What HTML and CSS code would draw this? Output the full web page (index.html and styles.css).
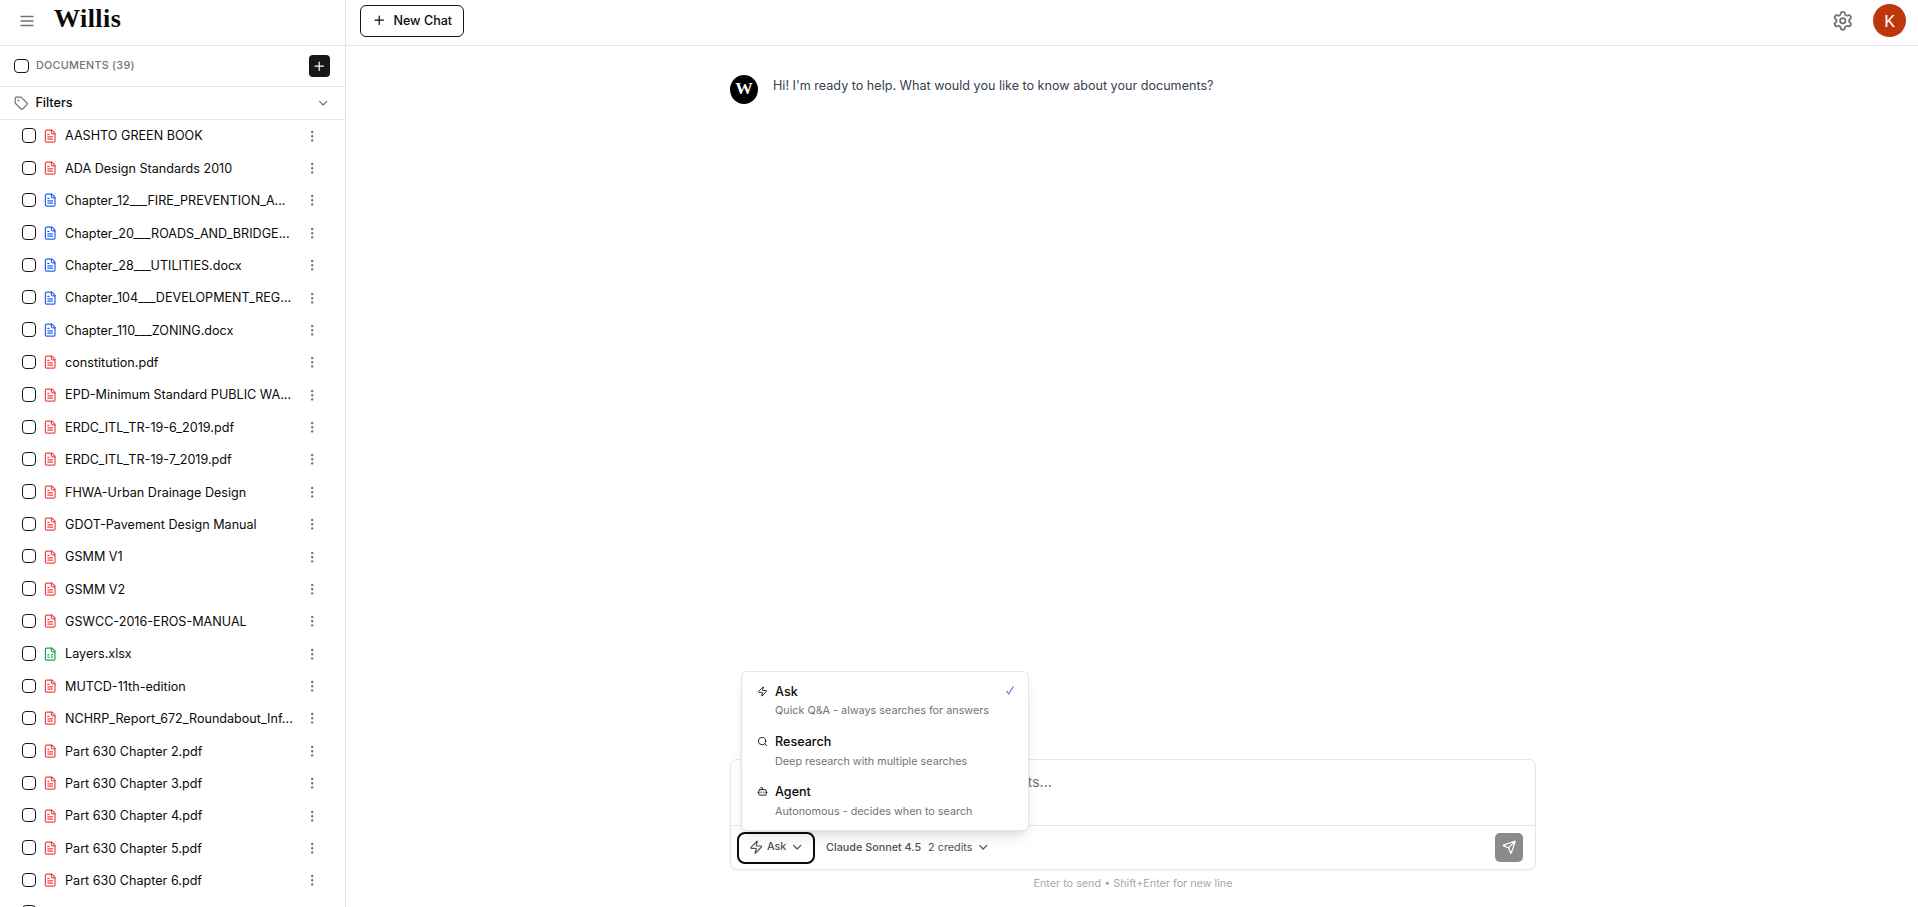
FILE: index.html
```html
<!DOCTYPE html>
<html lang="en">
<head>
<meta charset="utf-8">
<title>Willis</title>
<link rel="stylesheet" href="styles.css">
</head>
<body>
<svg class="sprite" xmlns="http://www.w3.org/2000/svg">
  <symbol id="menu" viewBox="0 0 24 24"><path d="M4 6h16M4 12h16M4 18h16"/></symbol>
  <symbol id="plus" viewBox="0 0 24 24"><path d="M5 12h14M12 5v14"/></symbol>
  <symbol id="chevron" viewBox="0 0 24 24"><path d="m6 9 6 6 6-6"/></symbol>
  <symbol id="tag" viewBox="0 0 24 24"><path d="M12.586 2.586A2 2 0 0 0 11.172 2H4a2 2 0 0 0-2 2v7.172a2 2 0 0 0 .586 1.414l8.704 8.704a2.426 2.426 0 0 0 3.42 0l6.58-6.58a2.426 2.426 0 0 0 0-3.42z"/><circle cx="7.5" cy="7.5" r=".5" fill="currentColor"/></symbol>
  <symbol id="doc" viewBox="0 0 24 24"><path d="M15 2H6a2 2 0 0 0-2 2v16a2 2 0 0 0 2 2h12a2 2 0 0 0 2-2V7Z"/><path d="M14 2v4a2 2 0 0 0 2 2h4M10 9H8M16 13H8M16 17H8"/></symbol>
  <symbol id="sheet" viewBox="0 0 24 24"><path d="M15 2H6a2 2 0 0 0-2 2v16a2 2 0 0 0 2 2h12a2 2 0 0 0 2-2V7Z"/><path d="M14 2v4a2 2 0 0 0 2 2h4M8 13h2M14 13h2M8 17h2M14 17h2"/></symbol>
  <symbol id="dots" viewBox="0 0 24 24"><circle cx="12" cy="12" r="1"/><circle cx="12" cy="5" r="1"/><circle cx="12" cy="19" r="1"/></symbol>
  <symbol id="gear" viewBox="0 0 24 24"><path d="M9.671 4.136a2.34 2.34 0 0 1 4.659 0 2.34 2.34 0 0 0 3.319 1.915 2.34 2.34 0 0 1 2.33 4.033 2.34 2.34 0 0 0 0 3.831 2.34 2.34 0 0 1-2.33 4.033 2.34 2.34 0 0 0-3.319 1.915 2.34 2.34 0 0 1-4.659 0 2.34 2.34 0 0 0-3.32-1.915 2.34 2.34 0 0 1-2.33-4.033 2.34 2.34 0 0 0 0-3.831A2.34 2.34 0 0 1 6.35 6.051a2.34 2.34 0 0 0 3.319-1.915"/><circle cx="12" cy="12" r="3"/></symbol>
  <symbol id="zap" viewBox="0 0 24 24"><path d="M4 14a1 1 0 0 1-.78-1.63l9.9-10.2a.5.5 0 0 1 .86.46l-1.92 6.02A1 1 0 0 0 13 10h7a1 1 0 0 1 .78 1.63l-9.9 10.2a.5.5 0 0 1-.86-.46l1.92-6.02A1 1 0 0 0 11 14z"/></symbol>
  <symbol id="search" viewBox="0 0 24 24"><path d="m21 21-4.34-4.34"/><circle cx="11" cy="11" r="8"/></symbol>
  <symbol id="bot" viewBox="0 0 24 24"><path d="M12 8V4H8"/><rect width="16" height="12" x="4" y="8" rx="2"/><path d="M2 14h2M20 14h2M15 13v2M9 13v2"/></symbol>
  <symbol id="send" viewBox="0 0 24 24"><path d="M14.536 21.686a.5.5 0 0 0 .937-.024l6.5-19a.496.496 0 0 0-.635-.635l-19 6.5a.5.5 0 0 0-.024.937l7.93 3.18a2 2 0 0 1 1.112 1.11zM21.854 2.147l-10.94 10.939"/></symbol>
  <symbol id="tick" viewBox="0 0 8 9"><path d="M.8 5.4 2.7 8 7.2.8"/></symbol>
</svg>
<div class="app">
  <aside class="sidebar">
    <div class="brand"><svg class="icon menu"><use href="#menu"/></svg><span class="logo">Willis</span></div>
    <div class="docs-head"><span class="check"></span><span class="docs-title">DOCUMENTS (39)</span><button class="add"><svg class="icon"><use href="#plus"/></svg></button></div>
    <div class="filters"><svg class="icon tag"><use href="#tag"/></svg><span class="filters-label">Filters</span><svg class="icon arrow"><use href="#chevron"/></svg></div>
    <ul class="list">
      <li class="row"><span class="check"></span><svg class="icon pdf"><use href="#doc"/></svg><span class="name">AASHTO GREEN BOOK</span><svg class="icon more"><use href="#dots"/></svg></li>
      <li class="row"><span class="check"></span><svg class="icon pdf"><use href="#doc"/></svg><span class="name">ADA Design Standards 2010</span><svg class="icon more"><use href="#dots"/></svg></li>
      <li class="row"><span class="check"></span><svg class="icon docx"><use href="#doc"/></svg><span class="name">Chapter_12___FIRE_PREVENTION_A...</span><svg class="icon more"><use href="#dots"/></svg></li>
      <li class="row"><span class="check"></span><svg class="icon docx"><use href="#doc"/></svg><span class="name">Chapter_20___ROADS_AND_BRIDGE...</span><svg class="icon more"><use href="#dots"/></svg></li>
      <li class="row"><span class="check"></span><svg class="icon docx"><use href="#doc"/></svg><span class="name">Chapter_28___UTILITIES.docx</span><svg class="icon more"><use href="#dots"/></svg></li>
      <li class="row"><span class="check"></span><svg class="icon docx"><use href="#doc"/></svg><span class="name">Chapter_104___DEVELOPMENT_REG...</span><svg class="icon more"><use href="#dots"/></svg></li>
      <li class="row"><span class="check"></span><svg class="icon docx"><use href="#doc"/></svg><span class="name">Chapter_110___ZONING.docx</span><svg class="icon more"><use href="#dots"/></svg></li>
      <li class="row"><span class="check"></span><svg class="icon pdf"><use href="#doc"/></svg><span class="name">constitution.pdf</span><svg class="icon more"><use href="#dots"/></svg></li>
      <li class="row"><span class="check"></span><svg class="icon pdf"><use href="#doc"/></svg><span class="name">EPD-Minimum Standard PUBLIC WA...</span><svg class="icon more"><use href="#dots"/></svg></li>
      <li class="row"><span class="check"></span><svg class="icon pdf"><use href="#doc"/></svg><span class="name">ERDC_ITL_TR-19-6_2019.pdf</span><svg class="icon more"><use href="#dots"/></svg></li>
      <li class="row"><span class="check"></span><svg class="icon pdf"><use href="#doc"/></svg><span class="name">ERDC_ITL_TR-19-7_2019.pdf</span><svg class="icon more"><use href="#dots"/></svg></li>
      <li class="row"><span class="check"></span><svg class="icon pdf"><use href="#doc"/></svg><span class="name">FHWA-Urban Drainage Design</span><svg class="icon more"><use href="#dots"/></svg></li>
      <li class="row"><span class="check"></span><svg class="icon pdf"><use href="#doc"/></svg><span class="name">GDOT-Pavement Design Manual</span><svg class="icon more"><use href="#dots"/></svg></li>
      <li class="row"><span class="check"></span><svg class="icon pdf"><use href="#doc"/></svg><span class="name">GSMM V1</span><svg class="icon more"><use href="#dots"/></svg></li>
      <li class="row"><span class="check"></span><svg class="icon pdf"><use href="#doc"/></svg><span class="name">GSMM V2</span><svg class="icon more"><use href="#dots"/></svg></li>
      <li class="row"><span class="check"></span><svg class="icon pdf"><use href="#doc"/></svg><span class="name">GSWCC-2016-EROS-MANUAL</span><svg class="icon more"><use href="#dots"/></svg></li>
      <li class="row"><span class="check"></span><svg class="icon xlsx"><use href="#sheet"/></svg><span class="name">Layers.xlsx</span><svg class="icon more"><use href="#dots"/></svg></li>
      <li class="row"><span class="check"></span><svg class="icon pdf"><use href="#doc"/></svg><span class="name">MUTCD-11th-edition</span><svg class="icon more"><use href="#dots"/></svg></li>
      <li class="row"><span class="check"></span><svg class="icon pdf"><use href="#doc"/></svg><span class="name">NCHRP_Report_672_Roundabout_Inf...</span><svg class="icon more"><use href="#dots"/></svg></li>
      <li class="row"><span class="check"></span><svg class="icon pdf"><use href="#doc"/></svg><span class="name">Part 630 Chapter 2.pdf</span><svg class="icon more"><use href="#dots"/></svg></li>
      <li class="row"><span class="check"></span><svg class="icon pdf"><use href="#doc"/></svg><span class="name">Part 630 Chapter 3.pdf</span><svg class="icon more"><use href="#dots"/></svg></li>
      <li class="row"><span class="check"></span><svg class="icon pdf"><use href="#doc"/></svg><span class="name">Part 630 Chapter 4.pdf</span><svg class="icon more"><use href="#dots"/></svg></li>
      <li class="row"><span class="check"></span><svg class="icon pdf"><use href="#doc"/></svg><span class="name">Part 630 Chapter 5.pdf</span><svg class="icon more"><use href="#dots"/></svg></li>
      <li class="row"><span class="check"></span><svg class="icon pdf"><use href="#doc"/></svg><span class="name">Part 630 Chapter 6.pdf</span><svg class="icon more"><use href="#dots"/></svg></li>
      <li class="row"><span class="check"></span></li>
    </ul>
  </aside>
  <main class="main">
    <header class="topbar">
      <button class="new-chat"><svg class="icon"><use href="#plus"/></svg>New Chat</button>
      <svg class="icon gear"><use href="#gear"/></svg>
      <span class="avatar">K</span>
    </header>
    <section class="thread">
      <div class="message"><span class="bot-avatar">W</span><p class="bubble">Hi! I'm ready to help. What would you like to know about your documents?</p></div>
    </section>
    <footer class="dock">
      <div class="composer">
        <div class="prompt"><p class="placeholder">ts...</p></div>
        <div class="tools">
          <button class="mode"><svg class="icon"><use href="#zap"/></svg><span>Ask</span><svg class="icon"><use href="#chevron"/></svg></button>
          <button class="model"><b>Claude Sonnet 4.5</b><span>2 credits</span><svg class="icon"><use href="#chevron"/></svg></button>
          <button class="send"><svg class="icon"><use href="#send"/></svg></button>
        </div>
        <div class="popup">
          <div class="option"><svg class="icon"><use href="#zap"/></svg><div><h4>Ask</h4><p>Quick Q&amp;A - always searches for answers</p></div><svg class="icon tick"><use href="#tick"/></svg></div>
          <div class="option"><svg class="icon"><use href="#search"/></svg><div><h4>Research</h4><p>Deep research with multiple searches</p></div></div>
          <div class="option"><svg class="icon"><use href="#bot"/></svg><div><h4>Agent</h4><p>Autonomous - decides when to search</p></div></div>
        </div>
      </div>
      <p class="hint">Enter to send • Shift+Enter for new line</p>
    </footer>
  </main>
</div>
</body>
</html>
```
FILE: styles.css
```css
* { box-sizing: border-box; margin: 0; padding: 0; }
body { font-family: Inter, "Liberation Sans", sans-serif; font-size: 12.6px; color: #0a0a0a; background: #fff; overflow: hidden; }
button { font: inherit; color: inherit; background: none; border: 0; }
.sprite { display: none; }
.icon { width: 14.4px; height: 14.4px; flex: none; fill: none; stroke: currentColor; stroke-width: 2; stroke-linecap: round; stroke-linejoin: round; }
.app { display: flex; height: 907px; }

.sidebar { width: 346px; flex: none; border-right: 1px solid #e5e5e5; overflow: hidden; }
.brand { height: 46px; display: flex; align-items: center; padding: 0 0 4px 18px; border-bottom: 1px solid #e5e5e5; }
.menu { width: 18px; height: 18px; color: #737373; stroke-width: 1.7; }
.logo { font: bold 26px/30px "Liberation Serif", serif; letter-spacing: .45px; margin: -4px 0 0 18px; }
.check { width: 14.4px; height: 14.4px; flex: none; border: 1px solid #171717; border-radius: 4px; }
.docs-head { height: 41px; display: flex; align-items: center; padding: 0 15px 0 14px; border-bottom: 1px solid #e5e5e5; }
.docs-head .check { width: 15px; }
.docs-title { font-size: 10.8px; font-weight: 500; letter-spacing: .27px; color: #737373; margin: -2px 0 0 7px; }
.add { width: 21px; height: 22px; margin-left: auto; border-radius: 4px; background: #171717; color: #fff; display: flex; align-items: center; justify-content: center; }
.filters { height: 33px; display: flex; align-items: center; gap: 7px; padding: 0 15px 0 14px; border-bottom: 1px solid #e5e5e5; }
.filters-label { font-weight: 450; margin-top: -2px; }
.tag, .arrow { color: #737373; }
.arrow { margin-left: auto; }
.list { list-style: none; margin-top: -.3px; }
.row { height: 32.38px; display: flex; align-items: center; padding: 0 26px 0 21.6px; }
.row .check { margin: -1px 6.8px 0 0; }
.name { margin-left: 7.9px; white-space: nowrap; }
.pdf { color: #ef4444; }
.docx { color: #2563eb; }
.xlsx { color: #16a34a; }
.more { margin-left: auto; color: #737373; }

.main { flex: 1; display: flex; flex-direction: column; }
.topbar { height: 46px; display: flex; align-items: center; padding: 0 12px 4px 14px; border-bottom: 1px solid #e5e5e5; }
.new-chat { height: 32px; width: 104px; display: flex; align-items: center; gap: 7px; padding-left: 11px; border: 1px solid #171717; border-radius: 6px; font-weight: 500; }
.gear { width: 21.6px; height: 21.6px; margin-left: auto; color: #737373; }
.avatar { width: 33px; height: 33px; margin-left: 19px; border-radius: 50%; background: #bf360c; color: #fff; font: 17px Roboto, sans-serif; display: flex; align-items: center; justify-content: center; }
.thread { flex: 1; padding: 29px 0 0 384px; }
.message { display: flex; align-items: flex-start; gap: 15px; }
.bot-avatar { width: 28px; height: 29px; border-radius: 50%; background: #000; color: #fff; font: bold 17.5px/27px "Liberation Serif", serif; text-align: center; }
.bubble { line-height: 20.5px; padding-top: 1px; color: #374151; }

.dock { width: 806px; margin-left: 384px; }
.composer { position: relative; height: 111px; border: 1px solid #e5e5e5; border-radius: 7px; box-shadow: 0 1px 2px rgba(0, 0, 0, .05); }
.prompt { height: 66px; padding: 11px 14px; font-size: 14.4px; line-height: 21px; color: #737373; border-bottom: 1px solid #e5e5e5; }
.placeholder { width: 307px; text-align: right; }
.tools { height: 43px; display: flex; align-items: center; padding: 0 12px 0 6px; font-size: 10.8px; color: #525252; }
.mode { width: 78px; height: 32px; display: flex; align-items: center; gap: 3.5px; padding: 0 0 1px 10px; border: 2px solid #0a0a0a; border-radius: 8px; font-weight: 500; }
.mode span { margin-top: -1px; }
.model { display: flex; align-items: center; margin-left: 11px; }
.model b { font-weight: 500; margin-right: 7px; }
.model .icon { margin-left: 4px; }
.send { width: 28px; height: 29px; margin-left: auto; border-radius: 5px; background: #8b8b8b; color: #fff; display: flex; align-items: center; justify-content: center; }
.popup { position: absolute; left: 10px; top: -89px; width: 288px; height: 160px; background: #fff; border: 1px solid #e5e5e5; border-radius: 6px; box-shadow: 0 9px 14px -3px rgba(0, 0, 0, .1), 0 4px 6px -4px rgba(0, 0, 0, .1); padding: 4px; }
.option { display: flex; height: 50.2px; padding: 7px 9px 0 11px; }
.option > .icon { width: 11px; height: 11px; margin: 3px 7px 0 0; color: #171717; }
.option h4 { font-size: 12.6px; font-weight: 500; line-height: 18px; }
.option p { font-size: 10.8px; line-height: 14.4px; margin-top: 3.4px; color: #737373; }
.option > .tick { width: 8px; height: 9px; margin: 3px 1px 0 auto; color: #4f6ff0; stroke-width: 1.1; }
.hint { font-size: 10.8px; line-height: 14px; text-align: center; color: #a8a8a8; margin: 7px 0 16px; }
```
